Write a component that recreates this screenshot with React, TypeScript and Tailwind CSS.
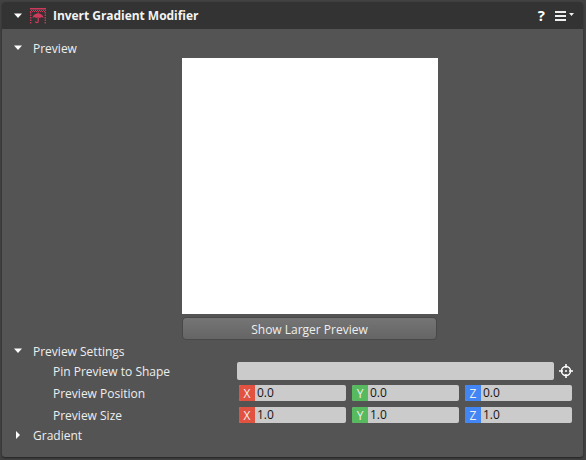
import React from 'react';

function Arrow({ open = true }: { open?: boolean }) {
  return (
    <svg className="block h-2 w-2 shrink-0 overflow-visible" viewBox="0 0 8 8" fill="#fff">
      {open ? <path d="M0 1.500h8L4 6z" /> : <path d="M2 0v8L6 4z" />}
    </svg>
  );
}

function InvertIcon() {
  return (
    <svg className="block h-4 w-4 shrink-0" viewBox="0 0 16 16" fill="none" stroke="#cf3a5c">
      <path d="M0 .8h16" strokeWidth="1.600" />
      <path d="M1 2.500h15" strokeDasharray="1 1" />
      <path d="M0 3.500h16" strokeDasharray="1 1" />
      <path d="M.7 4v12M15.300 4v12" strokeWidth="1.300" strokeDasharray="1.500 1" />
      <path d="M2.500 10C2.800 7 5 5.500 8 5.500s5.200 1.500 5.500 4.500l-1.800-.9-1.800.9L8 9.100l-1.900.9-1.800-.9-1.800.9z" fill="#cf3a5c" stroke="none" />
      <path d="M8.200 4.500v9q0 1.200-1.200 1.200T5.500 13.300" strokeWidth="1.200" />
    </svg>
  );
}

function Row({ label, children }: { label: string; children: React.ReactNode }) {
  return (
    <div className="flex h-[22px] items-center pl-[51px]">
      <div className="w-[184px] pt-px">{label}</div>
      {children}
    </div>
  );
}

function Field({ axis, color, value }: { axis: string; color: string; value: string }) {
  return (
    <div className="flex h-4 w-[107px] overflow-hidden rounded-[2px] bg-[#cbcbcb] leading-4">
      <span className={`w-4 pt-px text-center text-[#eee] ${color}`}>{axis}</span>
      <span className="pl-[2px] text-[#161616]">{value}</span>
    </div>
  );
}

function Vector({ value }: { value: string }) {
  return (
    <div className="flex gap-[6px] pl-[2px]">
      <Field axis="X" color="bg-[#e25241]" value={value} />
      <Field axis="Y" color="bg-[#57ba5e]" value={value} />
      <Field axis="Z" color="bg-[#4285f4]" value={value} />
    </div>
  );
}

export default function App() {
  return (
    <div className="h-[460px] w-[586px] bg-[#424242] p-[2px] font-['Open_Sans',sans-serif] text-[12px] leading-4 text-[#eee]">
      <div className="h-[455px] w-[581px] overflow-hidden rounded-[3px] bg-[#545454] shadow-[0_1px_2px_#222]">
        <header className="flex h-[27px] items-center bg-[#333] pl-3 pr-[9px]">
          <Arrow />
          <div className="ml-2"><InvertIcon /></div>
          <h1 className="ml-[7px] flex-1 pt-px font-bold tracking-[-0.04px] text-[#f4f4f4]">Invert Gradient Modifier</h1>
          <span className="mr-[10px] pb-[2px] text-[15px] font-bold text-white">?</span>
          <svg className="block h-3 w-[19px]" viewBox="0 0 19 12" fill="#eee">
            <path d="M0 1h11v2H0zM0 5h11v2H0zM0 9h11v2H0zM14 3h5l-2.500 3z" />
          </svg>
        </header>
        <div className="flex h-[29px] items-center pl-3 pt-[9px]">
          <Arrow /><span className="ml-[11px] pt-[2px]">Preview</span>
        </div>
        <div className="ml-[180px] h-64 w-64 bg-white" />
        <button className="ml-[180px] mt-[3px] block h-[23px] w-[255px] rounded-[4px] border border-[#484848] bg-linear-to-b from-[#757575] to-[#656565] pt-[3px] leading-[18px]">Show Larger Preview</button>
        <div className="flex h-[20px] items-center pl-3 pt-[2px]">
          <Arrow /><span className="ml-[11px] pt-px">Preview Settings</span>
        </div>
        <Row label="Pin Preview to Shape">
          <div className="h-[18px] w-[317px] rounded-[2px] bg-[#cbcbcb]" />
          <svg className="ml-[5px] block h-[14px] w-[14px]" viewBox="0 0 14 14" fill="none" stroke="#fff" strokeWidth="1.500">
            <circle cx="7" cy="7" r="4.500" />
            <path d="M7 0v4M7 10v4M0 7h4M10 7h4" />
            <circle cx="7" cy="7" r="1" fill="#fff" stroke="none" />
          </svg>
        </Row>
        <Row label="Preview Position"><Vector value="0.0" /></Row>
        <Row label="Preview Size"><Vector value="1.0" /></Row>
        <div className="flex h-[20px] items-center pb-[2px] pl-3">
          <Arrow open={false} /><span className="ml-[11px] pt-px">Gradient</span>
        </div>
      </div>
    </div>
  );
}
